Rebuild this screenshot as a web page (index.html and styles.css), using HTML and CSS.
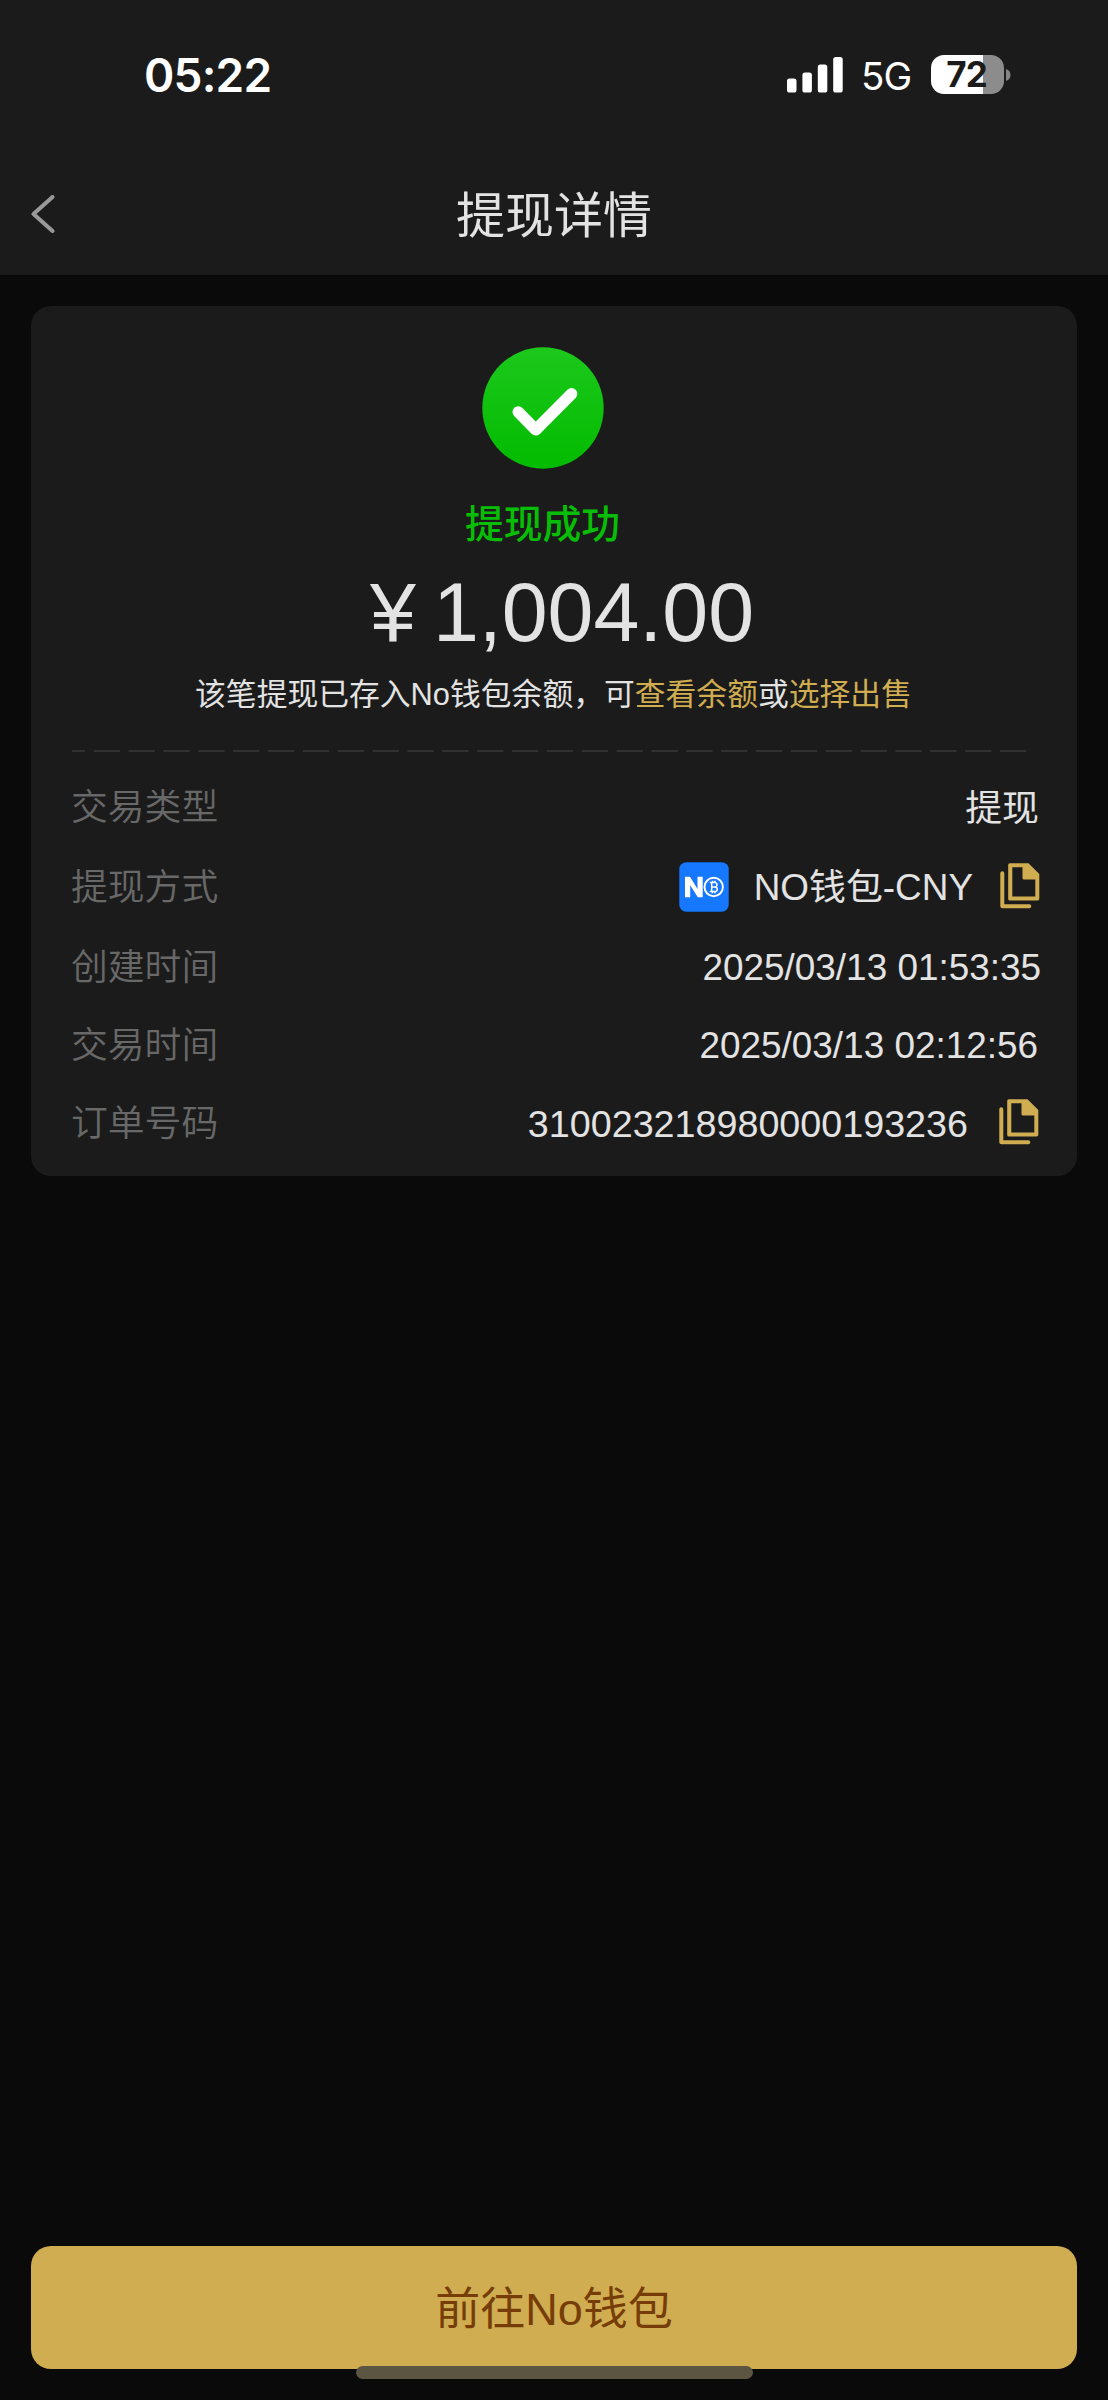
FILE: index.html
```html
<!DOCTYPE html>
<html lang="zh-CN">
<head>
<meta charset="utf-8">
<title>提现详情</title>
<link rel="stylesheet" href="styles.css">
</head>
<body>
<div class="screen">
  <header class="top">
    <div class="status">
      <span class="clock">05:22</span>
      <div class="indicators">
        <svg class="signal" width="56" height="37" viewBox="0 0 56 37" fill="#fff"><rect y="22.500" width="9.5" height="14" rx="2.6"/><rect x="15.4" y="16.500" width="9.5" height="20" rx="2.6"/><rect x="30.8" y="8.500" width="9.5" height="28" rx="2.6"/><rect x="46.2" y="1" width="9.5" height="35.500" rx="2.6"/></svg>
        <span class="network">5G</span>
        <div class="battery"><span class="level">72</span></div>
        <svg class="nub" width="5" height="12" viewBox="0 0 5 12"><path d="M0 0C6 1.500 6 10.500 0 12Z" fill="#858585"/></svg>
      </div>
    </div>
    <nav class="nav">
      <svg class="back" width="24" height="38" viewBox="0 0 24 38" fill="none" stroke="#999" stroke-width="4" stroke-linecap="round" stroke-linejoin="round"><path d="M21.500 2L2.500 19L21.500 36"/></svg>
      <h1 class="title">提现详情</h1>
    </nav>
  </header>

  <main class="card">
    <svg class="success" width="122" height="122" viewBox="0 0 122 122">
      <defs><linearGradient id="green" x1="0" y1="0" x2="0" y2="1"><stop offset="0" stop-color="#1cc81c"/><stop offset="1" stop-color="#03bb00"/></linearGradient></defs>
      <circle cx="61" cy="61" r="60.700" fill="url(#green)"/>
      <path d="M36.300 65L53.700 82.800L89.500 46.800" fill="none" stroke="#fff" stroke-width="11.600" stroke-linecap="round" stroke-linejoin="round"/>
    </svg>
    <div class="state">提现成功</div>
    <div class="amount"><span class="currency">¥</span><span>1,004.00</span></div>
    <p class="note">该笔提现已存入No钱包余额，可<a class="link">查看余额</a>或<a class="link">选择出售</a></p>
    <svg class="divider" width="956" height="2" viewBox="0 0 956 2"><path d="M-13.200 1H954.500" stroke="#313131" stroke-width="2" stroke-dasharray="26.300 8.560"/></svg>
    <dl class="details">
      <div class="row"><dt>交易类型</dt><dd class="kind">提现</dd></div>
      <div class="row">
        <dt>提现方式</dt>
        <dd class="method">
          <svg class="logo" width="50" height="50" viewBox="0 0 50 50"><rect x=".3" y=".3" width="49.400" height="49.400" rx="7" fill="#1677ff"/><path d="M6 35.300V14.800H11L18.500 27V14.800H23.700V35.300H18.800L11.200 23.200V35.300Z" fill="#fff"/><circle cx="34.700" cy="25" r="9.200" fill="none" stroke="#fff" stroke-width="1.900"/><path d="M30.800 20.600H35.500C38.800 20.600 38.800 24.900 35.500 24.900H32.500H35.500C39.300 24.900 39.300 29.600 35.500 29.600H30.800M32.700 20.600V29.600M33.500 18.800V20.600M36 18.800V20.600M33.500 29.600V31.300M36 29.600V31.300" fill="none" stroke="#fff" stroke-width="1.500"/></svg>
          <span class="wallet">NO钱包-CNY</span>
          <svg class="copy" width="40" height="46" viewBox="0 0 40 46"><path d="M2.300 10.300V43.300H29.300" fill="none" stroke="#d0ad50" stroke-width="4" stroke-linecap="round" stroke-linejoin="round"/><path fill-rule="evenodd" d="M9.800 .3H28.500L39.300 11V35.800Q39.300 37.500 37.600 37.500H9.800Q8.200 37.500 8.200 35.900V1.900Q8.200 .3 9.800 .3ZM12.300 4.200V33.500H35.300V16.500H24Q22.500 16.500 22.500 15V4.200Z" fill="#d0ad50"/></svg>
        </dd>
      </div>
      <div class="row"><dt>创建时间</dt><dd class="created">2025/03/13 01:53:35</dd></div>
      <div class="row"><dt>交易时间</dt><dd>2025/03/13 02:12:56</dd></div>
      <div class="row">
        <dt>订单号码</dt>
        <dd class="order">
          <span>310023218980000193236</span>
          <svg class="copy" width="40" height="46" viewBox="0 0 40 46"><path d="M2.300 10.300V43.300H29.300" fill="none" stroke="#d0ad50" stroke-width="4" stroke-linecap="round" stroke-linejoin="round"/><path fill-rule="evenodd" d="M9.800 .3H28.500L39.300 11V35.800Q39.300 37.500 37.600 37.500H9.800Q8.200 37.500 8.200 35.900V1.900Q8.200 .3 9.800 .3ZM12.300 4.200V33.500H35.300V16.500H24Q22.500 16.500 22.500 15V4.200Z" fill="#d0ad50"/></svg>
        </dd>
      </div>
    </dl>
  </main>

  <footer class="bottom">
    <button class="primary">前往No钱包</button>
    <div class="home-bar"></div>
  </footer>
</div>
</body>
</html>
```
FILE: styles.css
```css
* { box-sizing: border-box; }
body {
  margin: 0;
  background: #0a0a0a;
  color: #e3e3e3;
  font-family: "Liberation Sans", "Noto Sans CJK SC", sans-serif;
}
.screen {
  width: 1108px;
  height: 2400px;
  display: flex;
  flex-direction: column;
}
.top { height: 275px; background: #1b1b1b; }
.status {
  height: 149px;
  padding: 0 97px 0 144px;
  display: flex;
  justify-content: space-between;
  align-items: center;
  color: #fff;
  font-family: Inter, sans-serif;
}
.clock { padding-top: 1px; font-size: 46px; font-weight: 600; line-height: 56px; letter-spacing: -.8px; }
.indicators { display: flex; align-items: center; }
.network { margin-left: 18px; padding-top: 3px; width: 70px; font-size: 38.5px; line-height: 46px; letter-spacing: -1px; }
.battery {
  width: 73px;
  height: 39px;
  border-radius: 13px;
  background: linear-gradient(to right, #fff 52px, #8c8c8c 52px);
  text-align: center;
}
.level { display: block; margin-left: -2px; color: #1b1b1b; font-size: 35px; font-weight: 700; line-height: 38px; letter-spacing: -1px; }
.nub { margin-left: 2px; }
.nav {
  height: 126px;
  padding: 2px 31px 0;
  display: grid;
  grid-template-columns: 24px 1fr 24px;
  align-items: start;
}
.back { margin-top: 44px; }
.title { margin: 28px 0 0; text-align: center; font-size: 49px; font-weight: 400; line-height: 74px; }
.card {
  margin: 31px 31px 0;
  height: 870px;
  padding: 41px 38px 0 40px;
  border-radius: 20px;
  background: #1b1b1b;
  display: flex;
  flex-direction: column;
  align-items: center;
}
.success { margin-right: 25px; }
.state { margin: 28px 25px 0 0; color: #08bd05; font-size: 38.8px; font-weight: 500; line-height: 56px; }
.amount { margin-top: 12px; padding-left: 14px; font-size: 82.5px; line-height: 94px; display: flex; gap: 17px; }
.note { margin: 13px 0 0; padding-right: 3px; font-size: 30.8px; line-height: 46px; white-space: nowrap; }
.link { color: #d0ad50; }
.divider { margin: 32px 0 0 1px; align-self: flex-start; }
.details { margin: 16px 0 0; width: 100%; font-size: 36.9px; }
.row { height: 79px; display: flex; justify-content: space-between; align-items: center; }
.row:nth-child(2) { height: 80px; }
.row:nth-child(4) { height: 78px; }
dt { padding-top: 1px; color: #686868; font-size: 36.8px; font-weight: 350; line-height: 54px; }
.row:nth-child(3) dt { padding-top: 3px; }
dd { margin: 0; padding-right: 1px; display: flex; align-items: center; line-height: 54px; }
dd:not(.method, .order) { padding-top: 2px; }
.method, .order { padding-right: 0; }
.kind { margin-right: -1px; }
.method { margin-right: -1px; }
.method .copy { margin-top: -3px; }
.logo { margin-right: 25px; margin-top: -1px; }
.wallet { margin-right: 27px; padding-top: 1px; }
.created { margin-right: -3px; }
.order { font-size: 37.7px; }
.order .copy { margin-left: 31px; margin-top: -3px; }
.bottom { margin: auto 31px 0; height: 154px; display: flex; flex-direction: column; align-items: center; }
.primary {
  width: 100%;
  height: 123px;
  padding: 4px 0 0;
  border: 0;
  border-radius: 20px;
  background: #d0ad50;
  color: #763d08;
  font: 400 45px/68px "Liberation Sans", "Noto Sans CJK SC", sans-serif;
}
.home-bar { margin-top: -3px; width: 397px; height: 13px; border-radius: 7px; background: #5c5542; position: relative; }
```
